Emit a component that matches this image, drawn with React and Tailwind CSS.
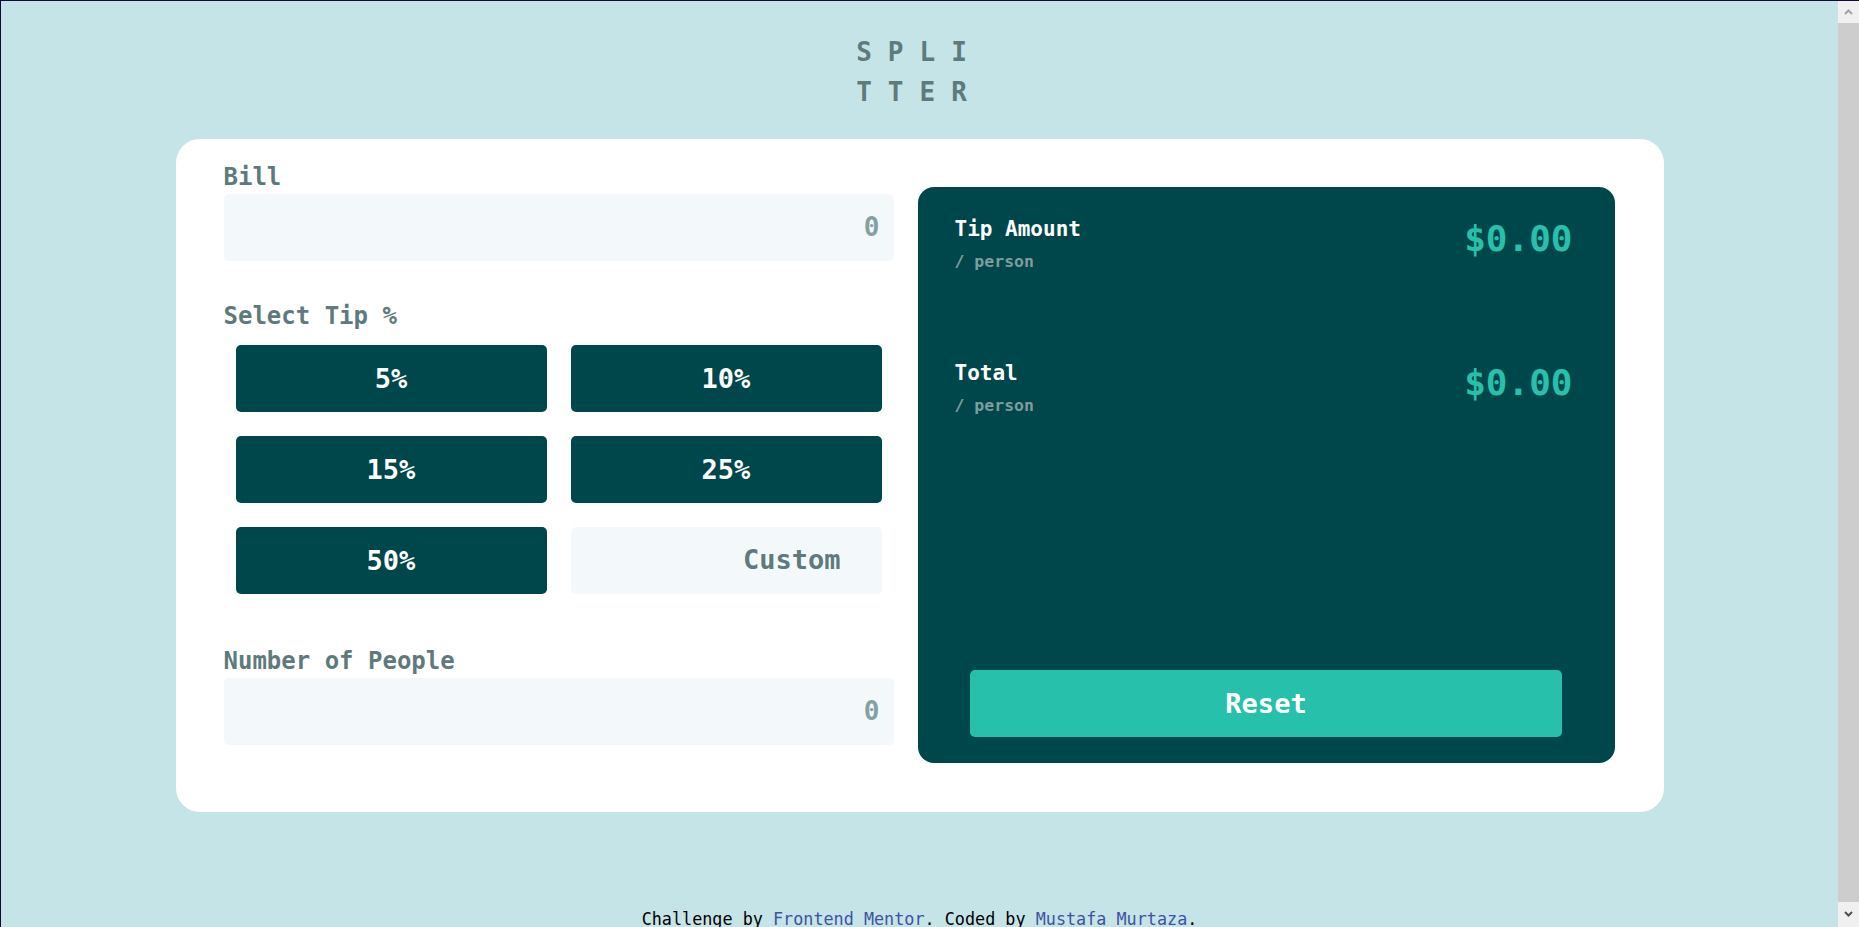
import React from "react";

const mono = "font-['DejaVu_Sans_Mono','Liberation_Mono',monospace]";

function TipButton({ label }) {
  return (
    <button className="h-[67px] rounded-[5px] bg-[#00474b] text-white text-[27px] font-bold leading-none">
      {label}
    </button>
  );
}

function Field({ label, className = "" }) {
  return (
    <div className={className}>
      <div className="text-[24px] leading-[33px] font-bold text-[#5e7a7d]">{label}</div>
      <div className="h-[67px] rounded-[5px] bg-[#f3f9fa] flex items-center justify-end pr-[14px] text-[26px] font-bold text-[#84a0a2]">
        0
      </div>
    </div>
  );
}

function ResultRow({ title, className = "" }) {
  return (
    <div className={"flex justify-between items-start " + className}>
      <div className="flex flex-col">
        <div className="text-[21px] leading-[30px] font-bold text-white">{title}</div>
        <div className="mt-[5px] text-[16.5px] leading-[26px] font-bold text-[#7f9d9f]">/ person</div>
      </div>
      <div className="mt-[5px] text-[36px] leading-[40px] font-bold text-[#26c0ab]">$0.00</div>
    </div>
  );
}

export default function App() {
  return (
    <div className={"flex h-[927px] overflow-hidden border-t border-l border-[#150a36] " + mono}>
      <main className="flex-1 min-w-0 bg-[#c5e4e7] flex flex-col items-center pt-[31px]">
        <div className="flex flex-col items-center text-[26px] leading-[40px] font-bold tracking-[16px] text-[#5e7a7d]">
          <div>SPLI</div>
          <div>TTER</div>
        </div>

        <div className="mt-[27px] w-[1488px] bg-white rounded-[24px] flex items-start gap-6 px-12 pt-[22px] pb-[49px]">
          <div className="w-[670px] flex flex-col">
            <Field label="Bill" />
            <div className="mt-[39px] text-[24px] leading-[33px] font-bold text-[#5e7a7d]">Select Tip %</div>
            <div className="mt-[12px] px-3 grid grid-cols-2 gap-6">
              <TipButton label="5%" />
              <TipButton label="10%" />
              <TipButton label="15%" />
              <TipButton label="25%" />
              <TipButton label="50%" />
              <div className="h-[67px] rounded-[5px] bg-[#f3f9fa] flex items-center justify-end pr-[41px] text-[27px] font-bold text-[#5e7a7d]">
                Custom
              </div>
            </div>
            <Field label="Number of People" className="mt-[51px]" />
          </div>

          <div className="mt-[26px] w-[697px] h-[576px] rounded-[16px] bg-[#00474b] flex flex-col pl-[37px] pr-[42px] pt-[27px] pb-[26px]">
            <ResultRow title="Tip Amount" />
            <ResultRow title="Total" className="mt-[83px]" />
            <button className="mt-auto self-center ml-[5px] w-[592px] h-[67px] rounded-[5px] bg-[#26c0ab] text-white text-[27px] font-bold leading-none">
              Reset
            </button>
          </div>
        </div>

        <p className="mt-[95px] text-[16.8px] leading-[24px] text-black whitespace-nowrap">
          Challenge by <a className="text-[#3e52a3]">Frontend Mentor</a>. Coded by{" "}
          <a className="text-[#3e52a3]">Mustafa Murtaza</a>.
        </p>
      </main>

      <div className="w-[21px] flex flex-col bg-[#cdcdcd]">
        <div className="h-[22px] bg-[#f0f0f0] flex items-center justify-center">
          <svg width="9" height="6" viewBox="0 0 9 6">
            <polyline points="1,5 4.5,1.5 8,5" fill="none" stroke="#a3a3a3" strokeWidth="2" />
          </svg>
        </div>
        <div className="flex-1" />
        <div className="h-[25px] bg-[#f0f0f0] flex items-center justify-center pb-[2px]">
          <svg width="9" height="6" viewBox="0 0 9 6">
            <polyline points="1,1 4.5,4.5 8,1" fill="none" stroke="#505050" strokeWidth="2" />
          </svg>
        </div>
      </div>
    </div>
  );
}
